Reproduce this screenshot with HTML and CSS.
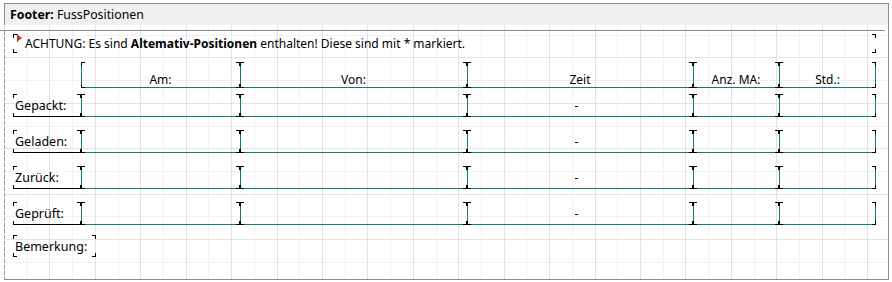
FILE: index.html
```html
<!DOCTYPE html>
<html>
<head>
	<title>Footer: FussPositionen</title>
	<link rel="stylesheet" href="styles.css">
</head>
<body>
	<div class="band">
		<div class="band-title"><b>Footer:</b> FussPositionen</div>
		<div class="band-rule"></div>
		<div class="band-body">
			<div class="notice">
				<svg class="notice-icon" width="5" height="8" viewBox="0 0 5 8">
					<rect x="0" y="0" width="1" height="8" fill="#6a5a5a"/>
					<polygon points="1,1 5,4 1,7" fill="#e0241c"/>
				</svg>
				<span>ACHTUNG: Es sind <b>Altemativ-Positionen</b> enthalten! Diese sind mit * markiert.</span>
			</div>
			<div class="row row-head">
				<div></div>
				<div class="cell">Am:</div>
				<div class="cell">Von:</div>
				<div class="cell">Zeit</div>
				<div class="cell">Anz. MA:</div>
				<div class="cell cell-last">Std.:</div>
			</div>
			<div class="row">
				<div class="label">Gepackt:</div>
				<div class="cell"></div>
				<div class="cell"></div>
				<div class="cell cell-time">-</div>
				<div class="cell"></div>
				<div class="cell cell-last"></div>
			</div>
			<div class="row">
				<div class="label">Geladen:</div>
				<div class="cell"></div>
				<div class="cell"></div>
				<div class="cell cell-time">-</div>
				<div class="cell"></div>
				<div class="cell cell-last"></div>
			</div>
			<div class="row">
				<div class="label">Zurück:</div>
				<div class="cell"></div>
				<div class="cell"></div>
				<div class="cell cell-time">-</div>
				<div class="cell"></div>
				<div class="cell cell-last"></div>
			</div>
			<div class="row">
				<div class="label">Geprüft:</div>
				<div class="cell"></div>
				<div class="cell"></div>
				<div class="cell cell-time">-</div>
				<div class="cell"></div>
				<div class="cell cell-last"></div>
			</div>
			<div class="label remark">Bemerkung:</div>
		</div>
	</div>
</body>
</html>
```

FILE: styles.css
```css
* {
	margin: 0px;
	padding: 0px;
	box-sizing: border-box;
}
:root {
	--mk: linear-gradient(#000, #000);
	--teal: linear-gradient(#0a7f7a, #0a7f7a);
	--marks:
		var(--mk) left top / 4px 1px no-repeat,
		var(--mk) left top / 1px 4px no-repeat,
		var(--mk) right top / 4px 1px no-repeat,
		var(--mk) right top / 1px 4px no-repeat,
		var(--mk) left bottom / 4px 1px no-repeat,
		var(--mk) left bottom / 1px 4px no-repeat,
		var(--mk) right bottom / 4px 1px no-repeat,
		var(--mk) right bottom / 1px 4px no-repeat;
}
body {
	font-family: "Noto Sans", "Open Sans", sans-serif;
	font-size: 12px;
	color: #000;
	background: #fff;
}
.band {
	margin: 3px 0 0 4px;
	width: 885px;
	height: 277px;
	border: 1px solid #8c8c8c;
	border-left: none;
	display: flex;
	flex-direction: column;
	background:
		repeating-linear-gradient(to right, #e2e2e2 0 1px, transparent 1px 45.43px),
		repeating-linear-gradient(to right, transparent 0 22.71px, #f1f1f1 22.71px 23.71px, transparent 23.71px 45.43px),
		repeating-linear-gradient(to bottom, transparent 0 8px, #e2e2e2 8px 9px, transparent 9px 45.43px),
		repeating-linear-gradient(to bottom, transparent 0 30.71px, #f1f1f1 30.71px 31.71px, transparent 31.71px 45.43px),
		#fff;
}
.band-title {
	height: 21px;
	line-height: 21px;
	padding-left: 5px;
	font-size: 12.3px;
	background: #f0f0f0;
	border-left: 1px solid #8c8c8c;
	margin-bottom: 5px;
	white-space: nowrap;
}
.band-rule {
	height: 1px;
	width: 885px;
	margin-left: -4px;
	background: #8c8c8c;
}
.band-body {
	flex: 1;
	padding-left: 9px;
	display: flex;
	flex-direction: column;
	align-items: flex-start;
	background: repeating-linear-gradient(to bottom, #9a9a9a 0 4px, transparent 4px 6px) left top / 1px 100% no-repeat;
}
.notice {
	margin-top: 3px;
	width: 863px;
	height: 19px;
	padding-left: 4px;
	display: flex;
	align-items: center;
	gap: 3px;
	background: var(--marks);
	white-space: nowrap;
}
.notice-icon {
	align-self: flex-start;
	flex: none;
}
.row {
	display: grid;
	grid-template-columns: 68px 159px 227px 226px 86px 97px;
	width: 863px;
	height: 23px;
	margin-top: 13px;
}
.row-head {
	margin-top: 9px;
}
.row-head + .row {
	margin-top: 9px;
}
.cell {
	display: flex;
	align-items: center;
	justify-content: center;
	background:
		var(--marks),
		var(--teal) left top / 1px 100% no-repeat,
		var(--teal) left bottom / 100% 1px no-repeat;
}
.cell-last {
	background:
		var(--marks),
		var(--teal) left top / 1px 100% no-repeat,
		var(--teal) right top / 1px 100% no-repeat,
		var(--teal) left bottom / 100% 1px no-repeat;
}
.cell-time {
	padding-right: 7px;
}
.row-head .cell {
	display: block;
	text-align: center;
	line-height: 16px;
	padding-top: 10px;
}
.label {
	display: flex;
	align-items: center;
	padding-left: 2px;
	white-space: nowrap;
	font-size: 12.5px;
	background:
		var(--marks),
		var(--mk) left bottom / 100% 1px no-repeat;
}
.remark {
	margin-top: 10px;
	width: 83px;
	height: 22px;
	background: var(--marks);
}
```
